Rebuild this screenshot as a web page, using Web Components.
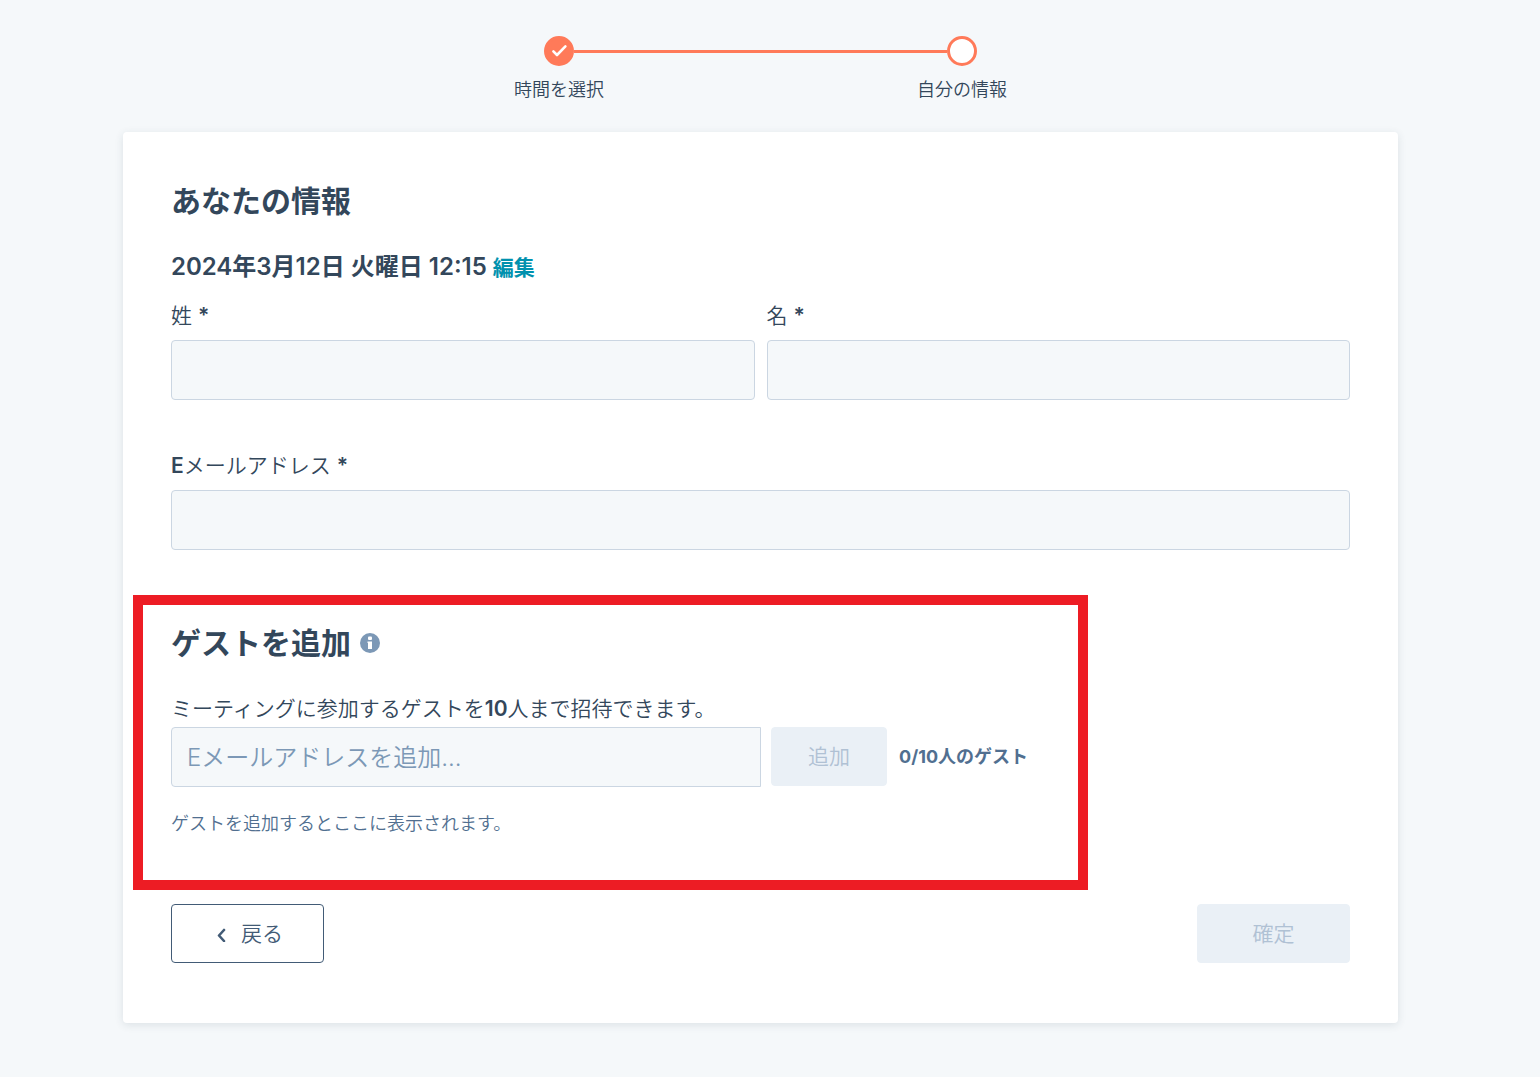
<!DOCTYPE html>
<html lang="ja">
<head>
<meta charset="utf-8">
<title>あなたの情報</title>
<style>
  body {
    margin: 0;
    background: #f5f8fa;
    color: #33475b;
    font-family: Inter, "Noto Sans CJK JP", sans-serif;
    font-size: 21px;
    line-height: 30px;
    font-weight: 350;
  }
  b { font-weight: 600; }
</style>
</head>
<body>
<booking-page>
  <progress-steps slot="steps">
    <progress-step state="done">時間を選択</progress-step>
    <progress-step state="current">自分の情報</progress-step>
  </progress-steps>
  <booking-card>
    <section-title>あなたの情報</section-title>
    <meeting-time>2024年3月12日 火曜日 12:15</meeting-time>
    <field-row>
      <text-field name="lastname">姓 <b>*</b></text-field>
      <text-field name="firstname">名 <b>*</b></text-field>
    </field-row>
    <field-row>
      <text-field name="email" type="email"><b>E</b>メールアドレス <b>*</b></text-field>
    </field-row>
    <guest-section></guest-section>
    <form-actions>
      <action-button variant="outline" icon="back">戻る</action-button>
      <action-button disabled>確定</action-button>
    </form-actions>
  </booking-card>
</booking-page>

<script>
const define = (name, html, setup) => {
  const template = document.createElement('template');
  template.innerHTML = html;
  customElements.define(name, class extends HTMLElement {
    constructor() {
      super();
      this.attachShadow({ mode: 'open' }).append(template.content.cloneNode(true));
    }
    connectedCallback() {
      if (setup) setup(this, this.shadowRoot);
    }
  });
};

define('booking-page', `
  <style>
    :host { display: block; padding: 36px 142px 54px 123px; }
    main { margin-top: 30px; }
  </style>
  <slot name="steps"></slot>
  <main><slot></slot></main>
`);

define('progress-steps', `
  <style>
    :host { display: flex; max-width: 806px; margin: 0 auto; }
    ::slotted(*) { flex: 1; }
  </style>
  <slot></slot>
`);

define('progress-step', `
  <style>
    :host { display: block; text-align: center; font-size: 18px; line-height: 24px; }
    .track { display: grid; grid-template-columns: 1fr 30px 1fr; align-items: center; margin-bottom: 12px; }
    .line { height: 3px; }
    :host([state="done"]) .after, :host([state="current"]) .before { background: #ff7a59; }
    .dot { box-sizing: border-box; width: 30px; height: 30px; border: 3px solid #ff7a59; border-radius: 50%; background: #fff; }
    :host([state="done"]) .dot { background: #ff7a59; }
    svg { display: none; }
    :host([state="done"]) svg { display: block; }
  </style>
  <div class="track">
    <span class="line before"></span>
    <span class="dot"><svg width="24" height="24" viewBox="0 0 24 24" fill="none" stroke="#fff" stroke-width="2.6" stroke-linecap="round" stroke-linejoin="round" aria-hidden="true"><path d="M6.4 12.4 10 16 18.4 7.4"/></svg></span>
    <span class="line after"></span>
  </div>
  <slot></slot>
`);

define('booking-card', `
  <style>
    :host { display: flex; flex-direction: column; padding: 48px 48px 60px; border-radius: 4px; background: #fff; box-shadow: 0 2px 9px rgba(45, 62, 80, .12); }
  </style>
  <slot></slot>
`);

define('section-title', `
  <style>
    :host { display: block; }
    h2 { margin: 0; font-size: 30px; line-height: 42px; font-weight: 700; }
  </style>
  <h2><slot></slot></h2>
`);

define('meeting-time', `
  <style>
    :host { display: block; margin: 27px 0 16px; font-size: 24px; line-height: 36px; font-weight: 600; }
    a { color: #0091ae; font-size: 21px; line-height: 30px; font-weight: 700; text-decoration: none; }
  </style>
  <slot></slot> <a href="#time">編集</a>
`);

define('field-row', `
  <style>
    :host { display: flex; gap: 12px; }
    :host(:not(:first-of-type)) { margin-top: 51px; }
    ::slotted(*) { flex: 1; }
  </style>
  <slot></slot>
`);

define('text-field', `
  <style>
    :host { display: flex; flex-direction: column; gap: 9px; }
    input { box-sizing: border-box; width: 100%; height: 60px; padding: 0 15px; border: 1px solid #cbd6e2; border-radius: 4px; background: #f5f8fa; color: #33475b; font: inherit; font-size: 24px; }
  </style>
  <label for="field"><slot></slot></label>
  <input id="field" type="text" required>
`, (host, root) => {
  const input = root.querySelector('input');
  input.name = host.getAttribute('name');
  input.type = host.getAttribute('type') || 'text';
});

define('action-button', `
  <style>
    :host { display: inline-flex; min-width: 153px; height: 59px; }
    button { flex: 1; display: flex; align-items: center; justify-content: center; gap: 13px; padding: 0; border: 1px solid #eaf0f6; border-radius: 4px; background: #eaf0f6; color: #b0c1d4; font: inherit; }
    :host([variant="outline"]) button { padding-left: 4px; border-color: #425b76; background: #fff; color: #425b76; }
    svg { display: none; }
    :host([icon="back"]) svg { display: block; }
  </style>
  <button type="button"><svg width="12" height="16" viewBox="0 0 12 16" fill="none" stroke="#425b76" stroke-width="2.6" stroke-linecap="round" stroke-linejoin="round" aria-hidden="true"><path d="M8 4 3 9.500 8 15"/></svg><slot></slot></button>
`, (host, root) => {
  root.querySelector('button').disabled = host.hasAttribute('disabled');
});

define('info-icon', `
  <style>
    :host { display: inline-flex; }
  </style>
  <svg width="20" height="20" viewBox="0 0 20 20" aria-hidden="true"><circle cx="10" cy="10" r="10" fill="#7c98b6"/><rect x="8" y="3.500" width="4" height="3.500" rx="1" fill="#fff"/><path fill="#fff" d="M7.500 8.500H12v7.500H8v-6h-.5z"/></svg>
`);

define('guest-section', `
  <style>
    :host { box-sizing: border-box; display: block; max-width: 955px; margin: 45px 0 14px -38px; padding: 17px 28px 42px; border: 10px solid #ed1c24; }
    header { display: flex; align-items: center; gap: 9px; margin-bottom: 30px; }
    b { font-weight: 600; }
    .row { display: flex; align-items: flex-start; gap: 10px; margin: 3px 0 23px; }
    input { box-sizing: border-box; width: 590px; min-width: 0; height: 60px; padding: 0 15px; border: 1px solid #cbd6e2; border-radius: 4px 0 0 4px; background: #f5f8fa; color: #33475b; font: inherit; font-size: 24px; }
    input::placeholder { color: #7c98b6; opacity: 1; }
    action-button { min-width: 116px; }
    .count { padding-left: 2px; color: #516f90; font-size: 18px; line-height: 60px; font-weight: 700; }
    .hint { margin: 0; color: #516f90; font-size: 18px; line-height: 28px; }
  </style>
  <header><section-title>ゲストを追加</section-title><info-icon></info-icon></header>
  <label for="guest">ミーティングに参加するゲストを<b>10</b>人まで招待できます。</label>
  <div class="row">
    <input id="guest" type="text" placeholder="Eメールアドレスを追加...">
    <action-button disabled>追加</action-button>
    <span class="count">0/10人のゲスト</span>
  </div>
  <p class="hint">ゲストを追加するとここに表示されます。</p>
`);

define('form-actions', `
  <style>
    :host { display: flex; justify-content: space-between; }
  </style>
  <slot></slot>
`);
</script>
</body>
</html>
